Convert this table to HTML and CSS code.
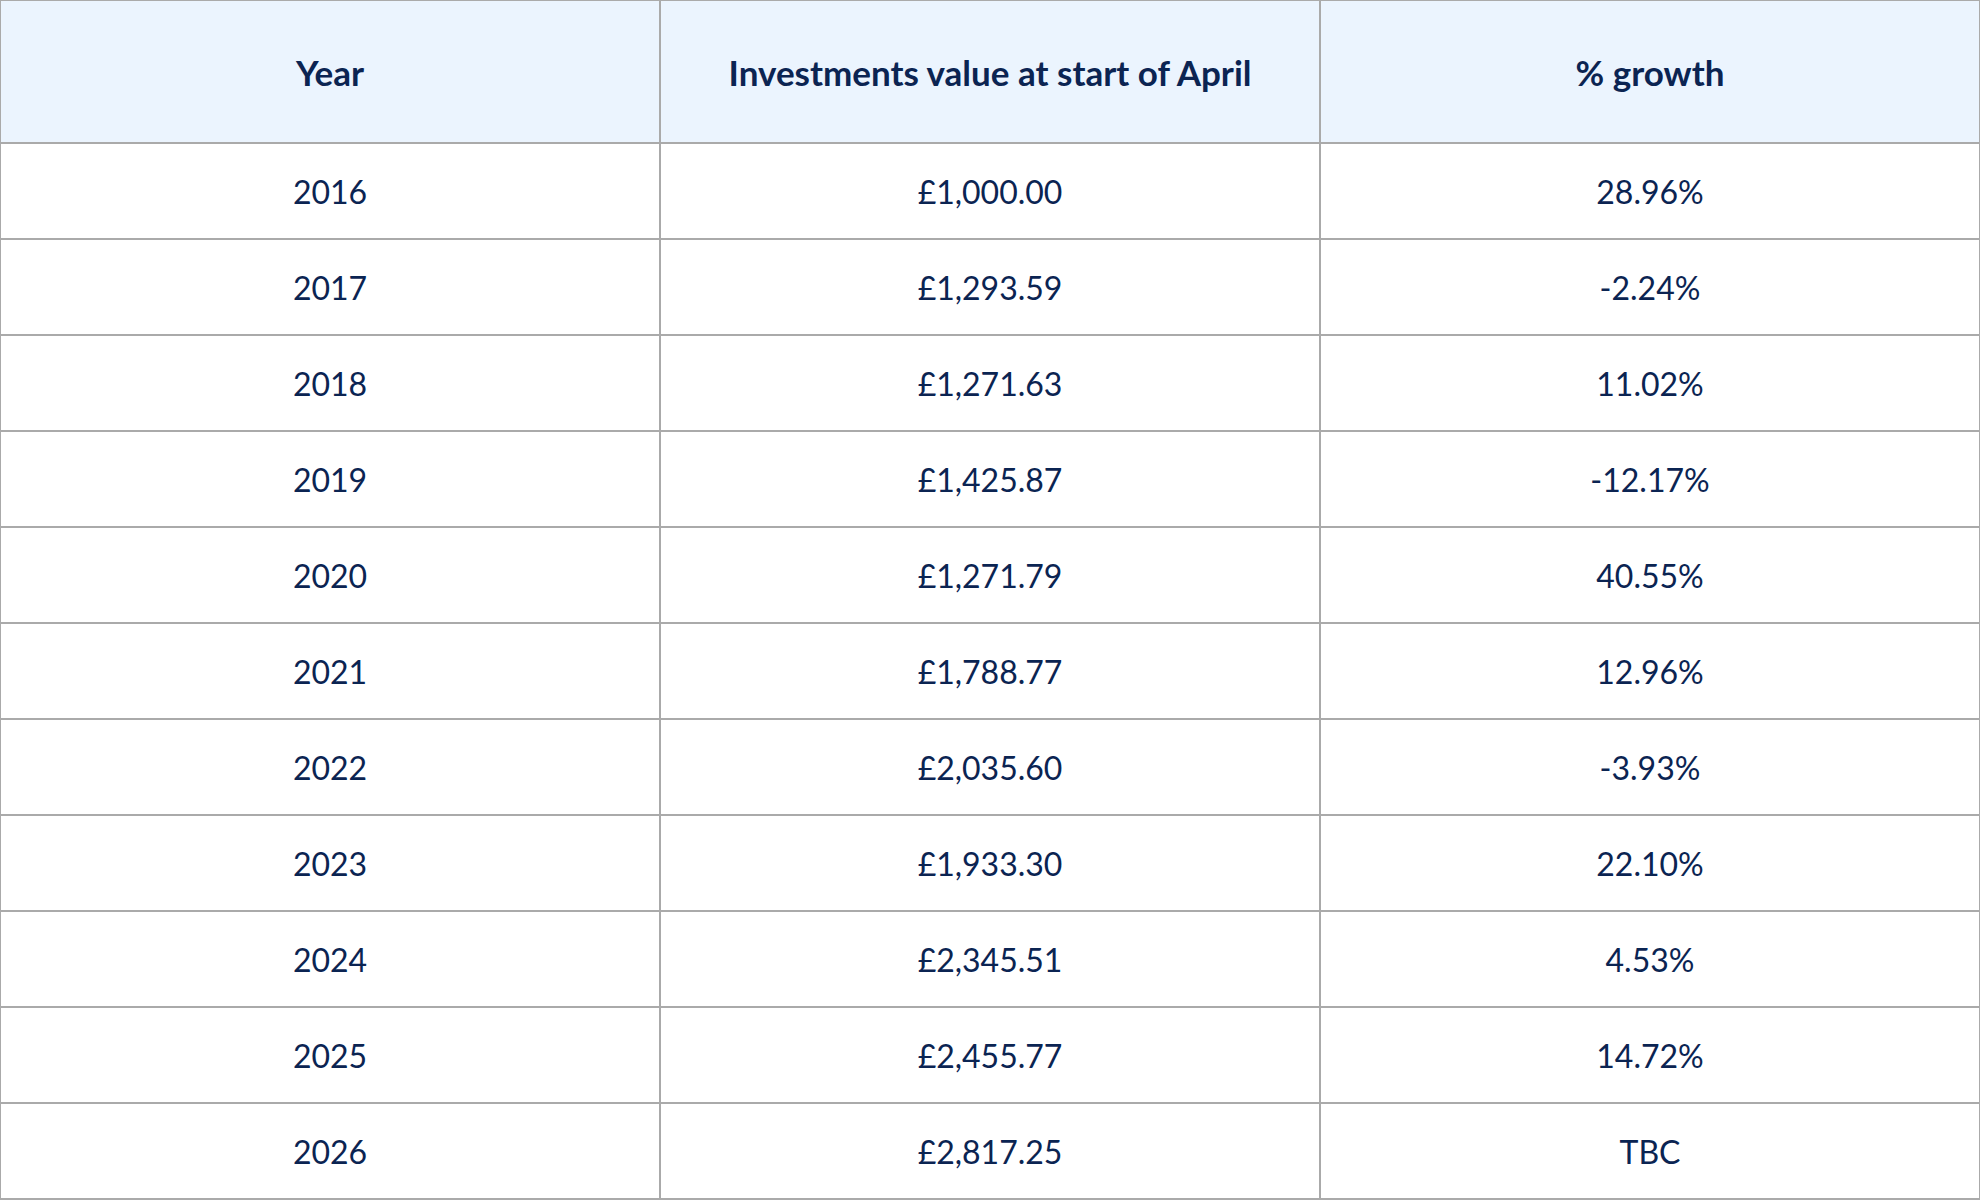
FILE: index.html
```html
<!DOCTYPE html>
<html lang="en">
<head>
<meta charset="utf-8">
<link rel="stylesheet" href="styles.css">
<title>Investments</title>
</head>
<body>
<table class="growth-table">
  <thead>
    <tr>
      <th>Year</th>
      <th>Investments value at start of April</th>
      <th>% growth</th>
    </tr>
  </thead>
  <tbody>
    <tr><td>2016</td><td>£1,000.00</td><td>28.96%</td></tr>
    <tr><td>2017</td><td>£1,293.59</td><td>-2.24%</td></tr>
    <tr><td>2018</td><td>£1,271.63</td><td>11.02%</td></tr>
    <tr><td>2019</td><td>£1,425.87</td><td>-12.17%</td></tr>
    <tr><td>2020</td><td>£1,271.79</td><td>40.55%</td></tr>
    <tr><td>2021</td><td>£1,788.77</td><td>12.96%</td></tr>
    <tr><td>2022</td><td>£2,035.60</td><td>-3.93%</td></tr>
    <tr><td>2023</td><td>£1,933.30</td><td>22.10%</td></tr>
    <tr><td>2024</td><td>£2,345.51</td><td>4.53%</td></tr>
    <tr><td>2025</td><td>£2,455.77</td><td>14.72%</td></tr>
    <tr><td>2026</td><td>£2,817.25</td><td>TBC</td></tr>
  </tbody>
</table>
</body>
</html>
```
FILE: styles.css
```css
html, body {
  margin: 0;
  padding: 0;
  background: #ffffff;
  overflow: hidden;
}

.growth-table {
  border-collapse: collapse;
  table-layout: fixed;
  width: 1982px;
  margin: -1px 0 0 -1px;
  font-family: "Lato", "Liberation Sans", sans-serif;
  color: #0b2452;
}

.growth-table th,
.growth-table td {
  border: 2px solid #aaaaaa;
  text-align: center;
  vertical-align: middle;
  padding: 0;
}

.growth-table th {
  background: #ebf4fe;
  font-weight: 700;
  font-size: 35px;
  height: 141px;
}

.growth-table td {
  font-weight: 400;
  font-size: 32px;
  height: 94px;
}
```
